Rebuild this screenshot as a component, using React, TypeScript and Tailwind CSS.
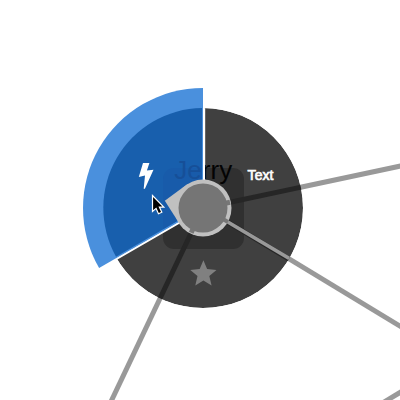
const CX = 203;
const CY = 208;

function Links() {
  return (
    <g stroke="#999999" strokeWidth="5">
      <line x1={CX} y1={CY} x2="410" y2="164" />
      <line x1={CX} y1="206.7" x2="410" y2="332.2" />
      <line x1={CX} y1={CY} x2="107" y2="410" />
      <line x1="375" y1="407.5" x2="410" y2="386.5" />
    </g>
  );
}

export default function App() {
  return (
    <main className="h-[400px] w-[400px] overflow-hidden bg-white">
      <svg viewBox="0 0 400 400" className="block h-full w-full select-none">
        <defs>
          <clipPath id="menu">
            <circle cx={CX} cy={CY} r="100" />
          </clipPath>
          <clipPath id="menuLeft">
            <rect x="100" y="100" width="103" height="220" />
          </clipPath>
          <clipPath id="menuRight">
            <rect x="205" y="100" width="110" height="220" />
          </clipPath>
        </defs>
        <Links />
        <g clipPath="url(#menu)">
          <circle cx={CX} cy={CY} r="100" fill="#404040" />
          <rect x="163" y="168" width="81" height="81" rx="11" fill="#303030" />
          <g stroke="#262626" strokeWidth="5">
            <line x1={CX} y1={CY} x2="410" y2="164" />
            <line x1={CX} y1={CY} x2="107" y2="410" />
            <line x1={CX} y1="207.2" x2="410" y2="332.4" />
          </g>
          <line x1={CX} y1="207.2" x2="410" y2="330.3" stroke="#999999" strokeWidth="3.6" />
          <path d="M204.1 208V100M203.5 208.5L103.5 266.3" stroke="#fff" strokeWidth="2.2" />
        </g>
        <path d="M203 208V88A120 120 0 0 0 99.1 268Z" fill="#4a90dd" />
        <path d="M202 206.8V108A100 100 0 0 0 116 256.7Z" fill="#185fad" />
        <path d="M163 229V179a11 11 0 0 1 11-11h28v38.5Z" fill="#185baa" />
        <text x="174.2" y="179" className="font-['Liberation_Sans',sans-serif] text-[26px] opacity-99" textLength="58" fill="#164f98" clipPath="url(#menuLeft)">Jerry</text>
        <text x="174.2" y="179" className="font-['Liberation_Sans',sans-serif] text-[26px] opacity-99" textLength="58" fill="#030303" clipPath="url(#menuRight)" aria-hidden="true">Jerry</text>
        <path d="M164.8 200.7L187.5 184L203 208L179 223Z" fill="#c0c0c0" />
        <circle cx={CX} cy={CY} r="28.5" fill="#c0c0c0" />
        <g stroke="#777777" strokeWidth="5">
          <path d="M203 208L230 202.3M203 208L191.2 232.8" />
          <path d="M203 207.2L228 222" strokeWidth="4" />
        </g>
        <circle cx={CX} cy={CY} r="24.5" fill="#757575" />
        <path d="M143 163h6.4l-2.5 7.5 6.6-.8-8.6 19.1h-1.2l1.3-13.3-6.2 1.5Z" fill="#fff" />
        <text x="247.6" y="180" className="font-['Liberation_Sans',sans-serif] text-[14px] opacity-99" textLength="25.8" fill="#fff" stroke="#fff" strokeWidth="0.7">Text</text>
        <path d="M203.4 260.3l3.7 8.8 9.4.8-7.2 6.1 2.3 9.6-8.2-5-8.1 5 2.2-9.6-7.2-6.1 9.4-.8Z" fill="#808080" />
        <path d="M152.5 195.5v16l3.6-3.1 2.4 5.3 3.3-1.5-2.4-5.1h4.4Z" fill="#000" stroke="#fff" strokeWidth="1.2" />
      </svg>
    </main>
  );
}
